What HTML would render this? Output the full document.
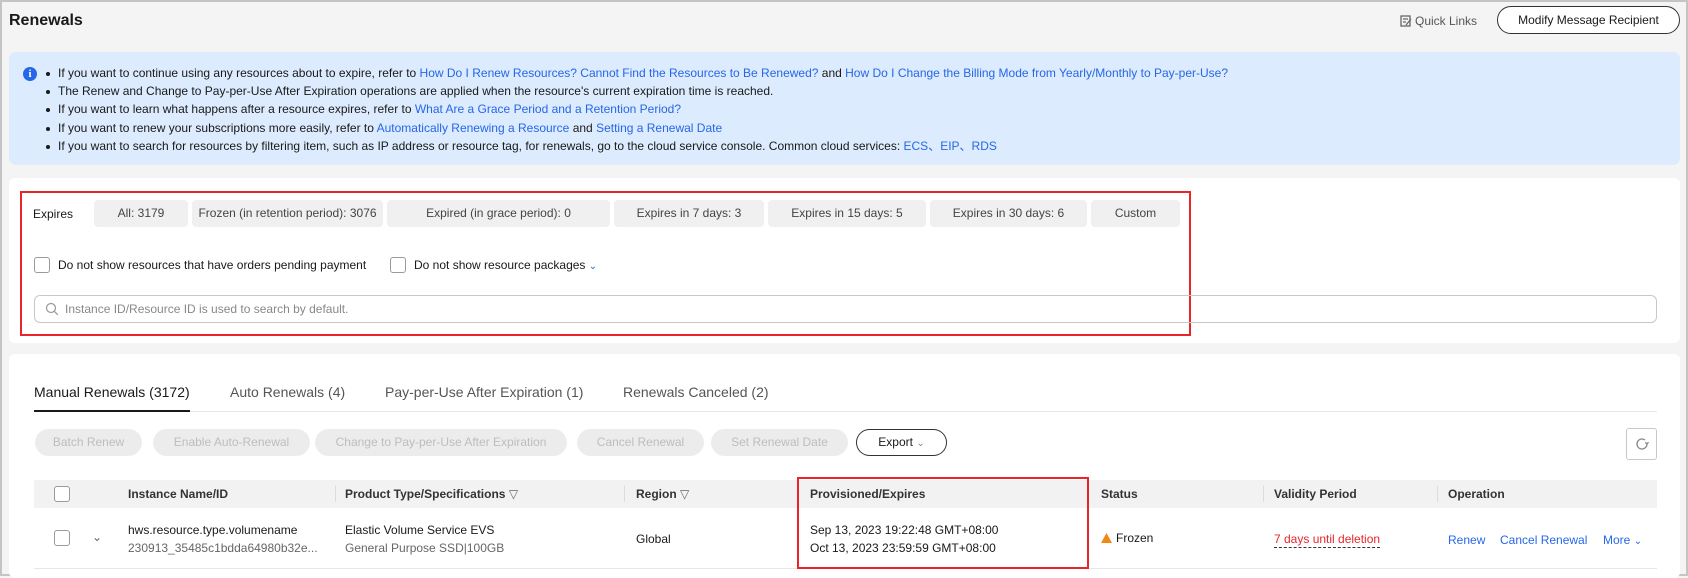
<!DOCTYPE html>
<html><head><meta charset="utf-8"><style>
*{box-sizing:border-box;margin:0;padding:0}
body{width:1688px;height:576px;overflow:hidden;background:#f4f4f4;font-family:"Liberation Sans",Arial,sans-serif;color:#191919;font-size:12px;position:relative;border:2px solid #c4c4c4}
.a{position:absolute;white-space:nowrap}
a,.lk{color:#2667e8;text-decoration:none}
.tab{position:absolute;top:198px;height:27px;background:#f0f0f0;border-radius:4px;line-height:27px;text-align:center;color:#444;white-space:nowrap}
.cb{position:absolute;width:16px;height:16px;border:1px solid #9a9a9a;border-radius:3px;background:#fff}
.btn{position:absolute;top:427px;height:27px;border-radius:14px;background:#ececec;color:#bdbdbd;line-height:27px;text-align:center;white-space:nowrap}
.th{position:absolute;top:485px;font-weight:bold;color:#333;white-space:nowrap}
.sep{position:absolute;top:484px;width:1px;height:16px;background:#dcdcdc}
li{list-style:none;position:relative;padding-left:14px;height:18.2px;line-height:18.2px;white-space:nowrap}
li:before{content:"";position:absolute;left:2px;top:8px;width:4px;height:4px;background:#191919;border-radius:50%}
</style></head><body>
<div class="a" style="left:7px;top:10px;font-size:16px;font-weight:bold">Renewals</div>
<svg class="a" style="left:1398px;top:13px" width="12" height="12" viewBox="0 0 12 12"><rect x="1" y="1" width="9" height="10" fill="none" stroke="#666" stroke-width="1.3"/><path d="M3 4h5M3 7h3M6 10l5-6" stroke="#666" stroke-width="1.3"/></svg>
<div class="a" style="left:1413px;top:12px;color:#555">Quick Links</div>
<div class="a" style="left:1495px;top:4px;width:183px;height:28px;border:1px solid #333;border-radius:14px;background:#fff;text-align:center;line-height:26px">Modify Message Recipient</div>

<div class="a" style="left:7px;top:50px;width:1671px;height:113px;background:#dcebfd;border-radius:7px"></div>
<div class="a" style="left:21px;top:65px;width:14px;height:14px;border-radius:50%;background:#2667e8;color:#fff;font-size:11px;font-weight:bold;text-align:center;line-height:14px;font-family:'Liberation Serif',serif">i</div>
<ul class="a" style="left:42px;top:62px">
<li>If you want to continue using any resources about to expire, refer to <a>How Do I Renew Resources? Cannot Find the Resources to Be Renewed?</a> and <a>How Do I Change the Billing Mode from Yearly/Monthly to Pay-per-Use?</a></li>
<li>The Renew and Change to Pay-per-Use After Expiration operations are applied when the resource's current expiration time is reached.</li>
<li>If you want to learn what happens after a resource expires, refer to <a>What Are a Grace Period and a Retention Period?</a></li>
<li>If you want to renew your subscriptions more easily, refer to <a>Automatically Renewing a Resource</a> and <a>Setting a Renewal Date</a></li>
<li>If you want to search for resources by filtering item, such as IP address or resource tag, for renewals, go to the cloud service console. Common cloud services: <a>ECS、EIP、RDS</a></li>
</ul>

<div class="a" style="left:7px;top:176px;width:1671px;height:165px;background:#fff;border-radius:6px"></div>
<div class="a" style="left:18px;top:189px;width:1171px;height:145px;border:2px solid #e8262a"></div>
<div class="a" style="left:31px;top:205px">Expires</div>
<div class="tab" style="left:92px;width:94px">All: 3179</div>
<div class="tab" style="left:190px;width:191px">Frozen (in retention period): 3076</div>
<div class="tab" style="left:385px;width:223px">Expired (in grace period): 0</div>
<div class="tab" style="left:612px;width:150px">Expires in 7 days: 3</div>
<div class="tab" style="left:766px;width:158px">Expires in 15 days: 5</div>
<div class="tab" style="left:928px;width:157px">Expires in 30 days: 6</div>
<div class="tab" style="left:1089px;width:89px">Custom</div>
<div class="cb" style="left:32px;top:255px"></div>
<div class="a" style="left:56px;top:256px">Do not show resources that have orders pending payment</div>
<div class="cb" style="left:388px;top:255px"></div>
<div class="a" style="left:412px;top:256px">Do not show resource packages <span style="color:#2667e8;font-size:10px">&#8964;</span></div>
<div class="a" style="left:32px;top:293px;width:1623px;height:28px;border:1px solid #c8c8c8;border-radius:6px"></div>
<svg class="a" style="left:43px;top:300px" width="14" height="14" viewBox="0 0 14 14"><circle cx="6" cy="6" r="4.5" fill="none" stroke="#999" stroke-width="1.2"/><path d="M9.3 9.3l3.5 3.5" stroke="#999" stroke-width="1.2"/></svg>
<div class="a" style="left:63px;top:300px;color:#888">Instance ID/Resource ID is used to search by default.</div>

<div class="a" style="left:7px;top:352px;width:1671px;height:224px;background:#fff;border-radius:6px"></div>
<div class="a" style="left:32px;top:382px;font-size:14px;color:#191919">Manual Renewals (3172)</div>
<div class="a" style="left:228px;top:382px;font-size:14px;color:#555">Auto Renewals (4)</div>
<div class="a" style="left:383px;top:382px;font-size:14px;color:#555">Pay-per-Use After Expiration (1)</div>
<div class="a" style="left:621px;top:382px;font-size:14px;color:#555">Renewals Canceled (2)</div>
<div class="a" style="left:32px;top:409px;width:1623px;height:1px;background:#e6e6e6"></div>
<div class="a" style="left:32px;top:408px;width:156px;height:2px;background:#191919"></div>

<div class="btn" style="left:33px;width:107px">Batch Renew</div>
<div class="btn" style="left:151px;width:157px">Enable Auto-Renewal</div>
<div class="btn" style="left:313px;width:252px">Change to Pay-per-Use After Expiration</div>
<div class="btn" style="left:575px;width:127px">Cancel Renewal</div>
<div class="btn" style="left:709px;width:137px">Set Renewal Date</div>
<div class="btn" style="left:854px;width:91px;background:#fff;border:1px solid #333;color:#191919;line-height:25px">Export <span style="color:#888;font-size:10px">&#8964;</span></div>
<div class="a" style="left:1624px;top:426px;width:31px;height:32px;border:1px solid #c8c8c8;border-radius:3px"></div>
<svg class="a" style="left:1632px;top:434px" width="16" height="16" viewBox="0 0 16 16"><path d="M13 8a5 5 0 1 1-2-4" fill="none" stroke="#888" stroke-width="1.3"/><path d="M13 8l-1.8-1.6M13 8l1.5-1.8" stroke="#888" stroke-width="1.3"/></svg>

<div class="a" style="left:32px;top:478px;width:1623px;height:28px;background:#f2f2f2"></div>
<div class="cb" style="left:52px;top:484px"></div>
<div class="th" style="left:126px">Instance Name/ID</div>
<div class="sep" style="left:333px"></div>
<div class="th" style="left:343px">Product Type/Specifications <span style="font-weight:normal;color:#666">&#9661;</span></div>
<div class="sep" style="left:622px"></div>
<div class="th" style="left:634px">Region <span style="font-weight:normal;color:#666">&#9661;</span></div>
<div class="th" style="left:808px">Provisioned/Expires</div>
<div class="th" style="left:1099px">Status</div>
<div class="sep" style="left:1261px"></div>
<div class="th" style="left:1272px">Validity Period</div>
<div class="sep" style="left:1435px"></div>
<div class="th" style="left:1446px">Operation</div>

<div class="cb" style="left:52px;top:528px"></div>
<div class="a" style="left:90px;top:528px;color:#666;font-size:12px">&#8964;</div>
<div class="a" style="left:126px;top:521px">hws.resource.type.volumename</div>
<div class="a" style="left:126px;top:539px;color:#666">230913_35485c1bdda64980b32e...</div>
<div class="a" style="left:343px;top:521px">Elastic Volume Service EVS</div>
<div class="a" style="left:343px;top:539px;color:#666">General Purpose SSD|100GB</div>
<div class="a" style="left:634px;top:530px">Global</div>
<div class="a" style="left:808px;top:521px">Sep 13, 2023 19:22:48 GMT+08:00</div>
<div class="a" style="left:808px;top:539px">Oct 13, 2023 23:59:59 GMT+08:00</div>
<svg class="a" style="left:1099px;top:531px" width="11" height="10" viewBox="0 0 11 10"><path d="M5.5 0L11 10H0z" fill="#f08a14"/></svg>
<div class="a" style="left:1114px;top:529px">Frozen</div>
<div class="a" style="left:1272px;top:530px;color:#e8262a;border-bottom:1px dashed #333;line-height:15px">7 days until deletion</div>
<div class="a lk" style="left:1446px;top:531px">Renew</div>
<div class="a lk" style="left:1498px;top:531px">Cancel Renewal</div>
<div class="a lk" style="left:1601px;top:531px">More <span style="font-size:10px">&#8964;</span></div>
<div class="a" style="left:32px;top:566px;width:1623px;height:1px;background:#e6e6e6"></div>
<div class="a" style="left:795px;top:475px;width:292px;height:92px;border:2px solid #e8262a"></div>
</body></html>
